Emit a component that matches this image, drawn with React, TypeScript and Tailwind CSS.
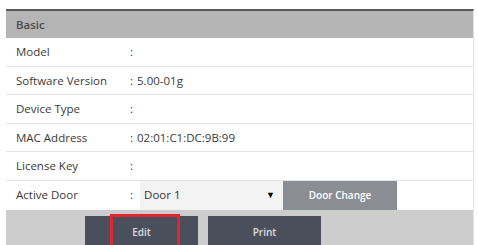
const rows: { label: string; value: string }[] = [
  { label: "Model", value: "" },
  { label: "Software Version", value: "5.00-01g" },
  { label: "Device Type", value: "" },
  { label: "MAC Address", value: "02:01:C1:DC:9B:99" },
  { label: "License Key", value: "" },
];

export default function App() {
  return (
    <div
      className="w-[478px] h-[245px] overflow-hidden bg-white pt-[9px] pl-[6px] pr-[4px] text-[11.5px] text-[#3a3a3a]"
      style={{ fontFamily: '"Open Sans", "Noto Sans", sans-serif' }}
    >
      <div className="border-t-2 border-[#5a5a5a] border-r border-r-[#e2e2e2]">
        {/* Header */}
        <div className="h-[27px] bg-[#b5b5b5] flex items-center pl-[10px] font-semibold text-[#4a4a4a]">
          Basic
        </div>

        {rows.map((r) => (
          <div
            key={r.label}
            className="h-[28.5px] flex items-center border-b border-[#e4e4e4] pl-[10px]"
          >
            <span className="w-[114px]">{r.label}</span>
            <span>:</span>
            {r.value && <span className="ml-[4px]">{r.value}</span>}
          </div>
        ))}

        {/* Active Door */}
        <div className="h-[29px] flex items-stretch pl-[10px]">
          <span className="w-[114px] flex items-center">Active Door</span>
          <span className="flex items-center">:</span>
          <div className="ml-[7px] w-[143px] bg-[#f3f3f3] flex items-center justify-between pl-[4px] pr-[8px] text-[#333]">
            <span>Door 1</span>
            <span className="text-[9px] text-black">▼</span>
          </div>
          <button className="w-[114px] bg-[#8b8d95] text-white font-semibold text-[10px] flex items-center justify-center">
            Door Change
          </button>
        </div>

        {/* Buttons */}
        <div className="h-[40px] bg-[#cdcdcd] flex items-end pt-[6px] pl-[79px] gap-[10px]">
          <div className="relative w-[113px] h-full bg-[#4b4e5b] flex items-center justify-center text-white/80 font-semibold text-[10px]">
            Edit
            <div className="absolute left-[25px] top-[-2px] w-[70px] h-[40px] border-[3px] border-[#e3262b]" />
          </div>
          <div className="w-[113px] h-full bg-[#4b4e5b] flex items-center justify-center text-white/80 font-semibold text-[10px]">
            Print
          </div>
        </div>
      </div>
    </div>
  );
}
